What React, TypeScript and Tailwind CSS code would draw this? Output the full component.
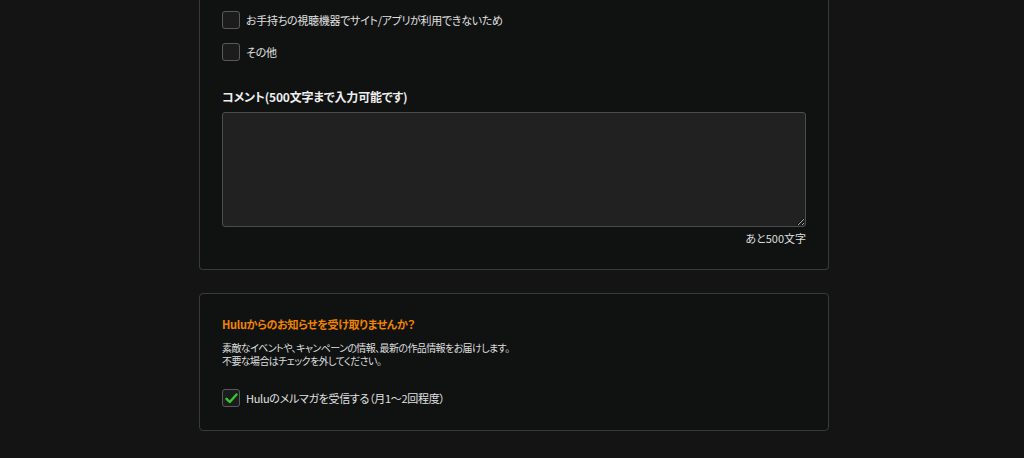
import React, { useState } from "react";

const font = "[font-family:'Noto_Sans_CJK_JP','Noto_Sans',sans-serif] [font-feature-settings:'palt']";

const Checkbox = ({ checked, onChange, label }: { checked: boolean; onChange: () => void; label: string }) => (
  <label className="flex items-center gap-[6px] cursor-pointer select-none">
    <span
      onClick={onChange}
      className="flex h-[18px] w-[18px] items-center justify-center rounded-[3px] border border-[#5a5a5a] bg-[#1c1c1c]"
    >
      {checked && (
        <svg width="13" height="11" viewBox="0 0 13 11" fill="none">
          <path d="M1.5 5.8 L4.8 9 L11.5 1.5" stroke="#34c934" strokeWidth="2.4" strokeLinecap="round" strokeLinejoin="round" />
        </svg>
      )}
    </span>
    <span className="text-[11px] leading-[18px] tracking-[-0.3px] text-[#e0e0e0]">{label}</span>
  </label>
);

export default function App() {
  const [device, setDevice] = useState(false);
  const [other, setOther] = useState(false);
  const [mail, setMail] = useState(true);
  const [comment, setComment] = useState("");

  return (
    <div className={`min-h-[458px] w-full bg-[#141414] ${font}`}>
      <div className="ml-[199px] w-[630px]">
        {/* reason panel, top is scrolled off */}
        <div className="rounded-b-[4px] border border-t-0 border-[#3a3a3a] bg-[#101212] px-[22px] pt-[11px] pb-[23px]">
          <div className="flex flex-col gap-[14px]">
            <Checkbox checked={device} onChange={() => setDevice(!device)} label="お手持ちの視聴機器でサイト/アプリが利用できないため" />
            <Checkbox checked={other} onChange={() => setOther(!other)} label="その他" />
          </div>
          <div className="mt-[27px] text-[12px] font-bold leading-[18px] tracking-[-0.2px] text-[#eeeeee]">コメント(500文字まで入力可能です)</div>
          <textarea
            value={comment}
            maxLength={500}
            onChange={(e) => setComment(e.target.value)}
            className="mt-[6px] block h-[115px] w-full rounded-[3px] border border-[#4c4c4c] bg-[#202120] p-2 text-[12px] text-[#e0e0e0] outline-none"
          />
          <div className="mt-[3px] text-right text-[11px] leading-[16px] text-[#dddddd]">あと{500 - comment.length}文字</div>
        </div>

        {/* newsletter panel */}
        <div className="mt-[23px] rounded-[4px] border border-[#3a3a3a] bg-[#101212] px-[22px] pt-[21px] pb-[23px]">
          <div className="text-[11px] font-bold leading-[18px] tracking-[-0.3px] text-[#f08300]">Huluからのお知らせを受け取りませんか？</div>
          <div className="mt-[8px] text-[10px] leading-[13px] tracking-[-0.6px] text-[#dddddd]">
            <p>素敵なイベントや、キャンペーンの情報、最新の作品情報をお届けします。</p>
            <p>不要な場合はチェックを外してください。</p>
          </div>
          <div className="mt-[22px]">
            <Checkbox checked={mail} onChange={() => setMail(!mail)} label="Huluのメルマガを受信する（月1〜2回程度）" />
          </div>
        </div>
      </div>
    </div>
  );
}
